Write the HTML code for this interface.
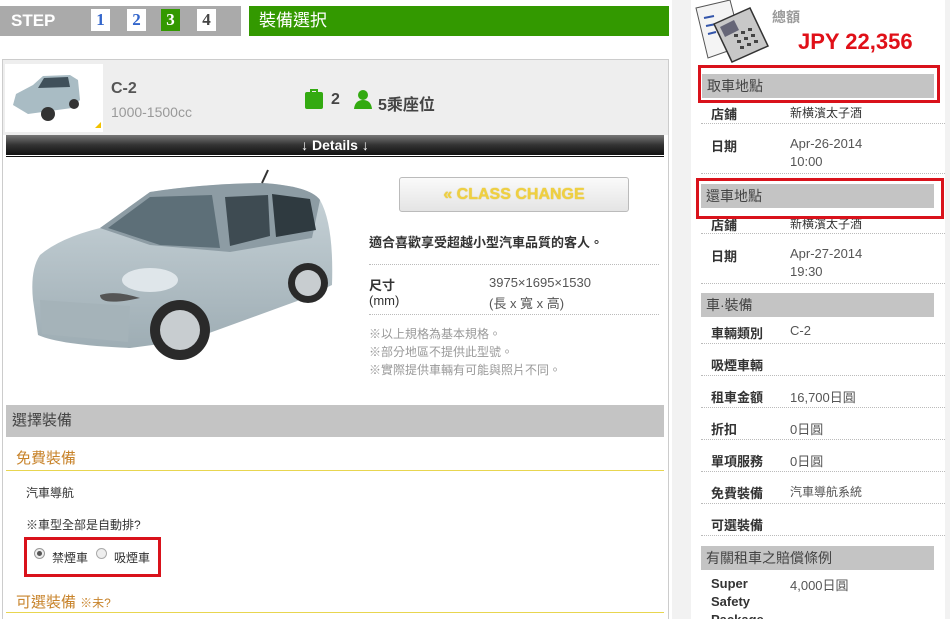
<!DOCTYPE html>
<html><head><meta charset="utf-8"><style>
*{margin:0;padding:0;box-sizing:border-box}
html,body{width:950px;height:619px;overflow:hidden}
body{background:#fff;font-family:"Liberation Sans","Noto Sans CJK TC",sans-serif;position:relative;color:#333}
.a{position:absolute}
.t{font-size:13px;white-space:nowrap}
.sn{top:9px;width:19px;height:22px;background:#fff;font:bold 17px "Liberation Serif",serif;text-align:center;line-height:22px;color:#36c}
.dl{height:0;border-top:1px dotted #bbb}
.sb{font-weight:bold;font-size:13px;color:#333}
.hd{background:#c4c4c4;font-size:14px;color:#444;padding-left:5px;line-height:24px;height:24px}
.rb{border:3px solid #d9121b}
</style></head><body>
<div class="a" style="left:0;top:6px;width:241px;height:30px;background:#aaa"></div>
<div class="a" style="left:11px;top:11px;font:bold 17px 'Liberation Sans',sans-serif;color:#fff">STEP</div>
<div class="a sn" style="left:91px">1</div>
<div class="a sn" style="left:127px">2</div>
<div class="a sn" style="left:161px;background:#339900;color:#fff">3</div>
<div class="a sn" style="left:197px;color:#444">4</div>
<div class="a" style="left:249px;top:6px;width:420px;height:30px;background:#339900;color:#fff;font-size:17px;line-height:30px;padding-left:10px">裝備選択</div>

<div class="a" style="left:2px;top:59px;width:667px;height:560px;border:1px solid #ccc;border-bottom:none;background:#fff"></div>
<div class="a" style="left:3px;top:60px;width:665px;height:75px;background:#eee"></div>
<div class="a" style="left:5px;top:64px;width:98px;height:68px;background:#fff"></div>
<svg class="a" style="left:8px;top:70px" width="90" height="55" viewBox="0 0 90 55"><path d="M5 35 L8 24 L25 15 L35 6 L62 5 L70 10 L72 30 L64 38 L20 44 Z" fill="#a9bcc4"/><path d="M36 8 L60 7 L62 17 L30 18Z" fill="#40505a"/><circle cx="40" cy="44" r="7" fill="#333"/><circle cx="66" cy="34" r="5" fill="#333"/></svg>
<div class="a" style="left:95px;top:122px;width:0;height:0;border-left:6px solid transparent;border-bottom:6px solid #f2c200"></div>
<div class="a" style="left:111px;top:80px;font-weight:bold;font-size:16px;color:#555">C-2</div>
<div class="a t" style="left:111px;top:104px;color:#999;font-size:14px">1000-1500cc</div>
<div class="a" style="left:305px;top:92px;width:18px;height:17px;background:#33aa11;border-radius:2px"></div>
<div class="a" style="left:310px;top:89px;width:8px;height:5px;border:2px solid #33aa11;border-bottom:none"></div>
<div class="a" style="left:331px;top:91px;font-weight:bold;font-size:16px;color:#444">2</div>
<svg class="a" style="left:354px;top:90px" width="18" height="19"><circle cx="9" cy="5" r="5" fill="#33aa11"/><path d="M0 19 Q1 10 9 10 Q17 10 18 19Z" fill="#33aa11"/></svg>
<div class="a" style="left:378px;top:91px;font-weight:bold;font-size:16px;color:#444">5乘座位</div>

<div class="a" style="left:6px;top:135px;width:658px;height:20px;background:linear-gradient(#777,#333 50%,#111);color:#fff;font-size:14px;font-weight:bold;text-align:center;line-height:20px">↓ Details ↓</div>
<div class="a" style="left:6px;top:156px;width:658px;height:1px;background:#111"></div>

<svg class="a" style="left:0;top:155px" width="360" height="250" viewBox="0 155 360 250">
<defs><linearGradient id="g" x1="0" y1="0" x2="0" y2="1"><stop offset="0" stop-color="#c9d4d9"/><stop offset="1" stop-color="#9eadb4"/></linearGradient></defs>
<path d="M33 300 Q30 270 40 255 Q60 238 100 228 L150 192 Q200 184 262 183 Q310 186 320 200 Q334 225 332 285 L300 300 L190 340 L130 348 Q60 345 38 335Z" fill="url(#g)"/>
<path d="M100 228 L150 192 Q200 184 262 183 Q310 186 320 200 L312 238 L230 252 L150 245Z" fill="#8d9ca4"/>
<path d="M108 228 L150 197 L212 195 L220 248 L160 245Z" fill="#5d6f78"/>
<path d="M225 197 L268 195 L270 236 L230 246Z" fill="#3e4b52"/>
<path d="M272 194 L310 199 L316 230 L276 237Z" fill="#2f3a40"/>
<path d="M40 300 L130 306 L128 342 L42 334Z" fill="#a5b3b9"/>
<path d="M130 300 Q100 305 100 295 Q115 290 140 298Z" fill="#555"/>
<circle cx="180" cy="330" r="30" fill="#2a2a2a"/><circle cx="180" cy="330" r="20" fill="#c8cdd0"/>
<circle cx="308" cy="283" r="20" fill="#2a2a2a"/><circle cx="308" cy="283" r="13" fill="#c8cdd0"/>
<ellipse cx="150" cy="280" rx="28" ry="12" fill="#dfe6ea"/>
<line x1="262" y1="183" x2="268" y2="170" stroke="#333" stroke-width="2"/>
</svg>

<div class="a" style="left:399px;top:177px;width:230px;height:35px;border:1px solid #bbb;border-radius:3px;background:linear-gradient(#fafafa,#e4e4e4);color:#f0d040;font:bold 16px 'Liberation Sans',sans-serif;text-align:center;line-height:34px;text-shadow:0 0 1px #c9a800">« CLASS CHANGE</div>
<div class="a t" style="left:369px;top:232px;font-weight:bold;color:#333">適合喜歡享受超越小型汽車品質的客人。</div>
<div class="a dl" style="left:369px;top:264px;width:290px"></div>
<div class="a t" style="left:369px;top:275px;font-weight:bold">尺寸</div>
<div class="a t" style="left:369px;top:293px">(mm)</div>
<div class="a t" style="left:489px;top:275px;color:#555">3975×1695×1530</div>
<div class="a t" style="left:489px;top:293px;color:#555">(長 x 寬 x 高)</div>
<div class="a dl" style="left:369px;top:314px;width:290px"></div>
<div class="a t" style="left:369px;top:325px;color:#999;font-size:12px;line-height:18px">※以上規格為基本規格。<br>※部分地區不提供此型號。<br>※實際提供車輛有可能與照片不同。</div>

<div class="a" style="left:6px;top:405px;width:658px;height:32px;background:#c4c4c4;color:#444;font-size:15px;line-height:32px;padding-left:6px">選擇裝備</div>
<div class="a" style="left:16px;top:447px;color:#c8842c;font-size:15px">免費裝備</div>
<div class="a" style="left:6px;top:470px;width:658px;height:1px;background:#e8d650"></div>
<div class="a t" style="left:26px;top:484px;font-size:12px">汽車導航</div>
<div class="a t" style="left:26px;top:516px;font-size:12px">※車型全部是自動排?</div>
<div class="a rb" style="left:24px;top:537px;width:137px;height:40px"></div>
<div class="a" style="left:34px;top:548px;width:11px;height:11px;border-radius:50%;border:1px solid #999;background:#eee"><div style="width:5px;height:5px;border-radius:50%;background:#555;margin:2px"></div></div>
<div class="a t" style="left:52px;top:549px;font-size:12px">禁煙車</div>
<div class="a" style="left:96px;top:548px;width:11px;height:11px;border-radius:50%;border:1px solid #aaa;background:#eee"></div>
<div class="a t" style="left:114px;top:549px;font-size:12px">吸煙車</div>
<div class="a" style="left:16px;top:591px;color:#c8842c;font-size:15px">可選裝備 <span style="font-size:12px">※未?</span></div>
<div class="a" style="left:6px;top:612px;width:658px;height:1px;background:#e8d650"></div>

<div class="a" style="left:672px;top:0;width:278px;height:619px;background:#f2f2f2"></div>
<div class="a" style="left:691px;top:0;width:254px;height:619px;background:#fff"></div>
<svg class="a" style="left:692px;top:0" width="80" height="66">
<path d="M4 8 L38 0 L50 46 L16 58Z" fill="#f4f4f4" stroke="#555"/>
<path d="M12 18 L22 16 M14 26 L24 24 M16 34 L24 32" stroke="#3355aa" stroke-width="2"/>
<path d="M22 24 L58 8 L76 46 L40 62Z" fill="#c8c8c8" stroke="#333" stroke-width="1.5"/>
<path d="M28 27 L42 20 L47 30 L33 37Z" fill="#667"/>
<g fill="#444"><rect x="42" y="34" width="4" height="3"/><rect x="49" y="31" width="4" height="3"/><rect x="56" y="28" width="4" height="3"/><rect x="45" y="40" width="4" height="3"/><rect x="52" y="37" width="4" height="3"/><rect x="59" y="34" width="4" height="3"/><rect x="48" y="46" width="4" height="3"/><rect x="55" y="43" width="4" height="3"/><rect x="62" y="40" width="4" height="3"/></g>
</svg>
<div class="a" style="left:772px;top:7px;color:#999;font-size:14px;font-weight:bold">總額</div>
<div class="a" style="left:798px;top:29px;color:#e01018;font:bold 22px 'Liberation Sans',sans-serif">JPY 22,356</div>

<div class="a rb" style="left:698px;top:65px;width:242px;height:38px"></div>
<div class="a hd" style="left:702px;top:74px;width:232px">取車地點</div>
<div class="a sb" style="left:711px;top:104px">店鋪</div><div class="a t" style="left:790px;top:104px;font-size:12px">新横濱太子酒</div>
<div class="a dl" style="left:701px;top:123px;width:244px"></div>
<div class="a sb" style="left:711px;top:136px">日期</div><div class="a t" style="left:790px;top:135px;line-height:18px;color:#555">Apr-26-2014<br>10:00</div>
<div class="a dl" style="left:701px;top:173px;width:244px"></div>

<div class="a sb" style="left:711px;top:215px">店鋪</div><div class="a t" style="left:790px;top:215px;font-size:12px">新横濱太子酒</div>
<div class="a" style="left:700px;top:206px;width:240px;height:11px;background:#fff"></div>
<div class="a rb" style="left:696px;top:178px;width:248px;height:41px"></div>
<div class="a hd" style="left:701px;top:184px;width:233px">還車地點</div>
<div class="a dl" style="left:701px;top:233px;width:244px"></div>
<div class="a sb" style="left:711px;top:246px">日期</div><div class="a t" style="left:790px;top:245px;line-height:18px;color:#555">Apr-27-2014<br>19:30</div>
<div class="a dl" style="left:701px;top:283px;width:244px"></div>

<div class="a hd" style="left:701px;top:293px;width:233px">車·裝備</div>
<div class="a sb" style="left:711px;top:323px">車輛類別</div><div class="a t" style="left:790px;top:323px;color:#555">C-2</div>
<div class="a dl" style="left:701px;top:343px;width:244px"></div>
<div class="a sb" style="left:711px;top:355px">吸煙車輛</div>
<div class="a dl" style="left:701px;top:375px;width:244px"></div>
<div class="a sb" style="left:711px;top:387px">租車金額</div><div class="a t" style="left:790px;top:387px;color:#555">16,700日圓</div>
<div class="a dl" style="left:701px;top:407px;width:244px"></div>
<div class="a sb" style="left:711px;top:419px">折扣</div><div class="a t" style="left:790px;top:419px;color:#555">0日圓</div>
<div class="a dl" style="left:701px;top:439px;width:244px"></div>
<div class="a sb" style="left:711px;top:451px">單項服務</div><div class="a t" style="left:790px;top:451px;color:#555">0日圓</div>
<div class="a dl" style="left:701px;top:471px;width:244px"></div>
<div class="a sb" style="left:711px;top:483px">免費裝備</div><div class="a t" style="left:790px;top:483px;font-size:12px;color:#555">汽車導航系統</div>
<div class="a dl" style="left:701px;top:503px;width:244px"></div>
<div class="a sb" style="left:711px;top:515px">可選裝備</div>
<div class="a dl" style="left:701px;top:535px;width:244px"></div>
<div class="a hd" style="left:701px;top:546px;width:233px">有關租車之賠償條例</div>
<div class="a sb" style="left:711px;top:575px;line-height:18px">Super<br>Safety<br>Package</div><div class="a t" style="left:790px;top:575px;color:#555">4,000日圓</div>
</body></html>
